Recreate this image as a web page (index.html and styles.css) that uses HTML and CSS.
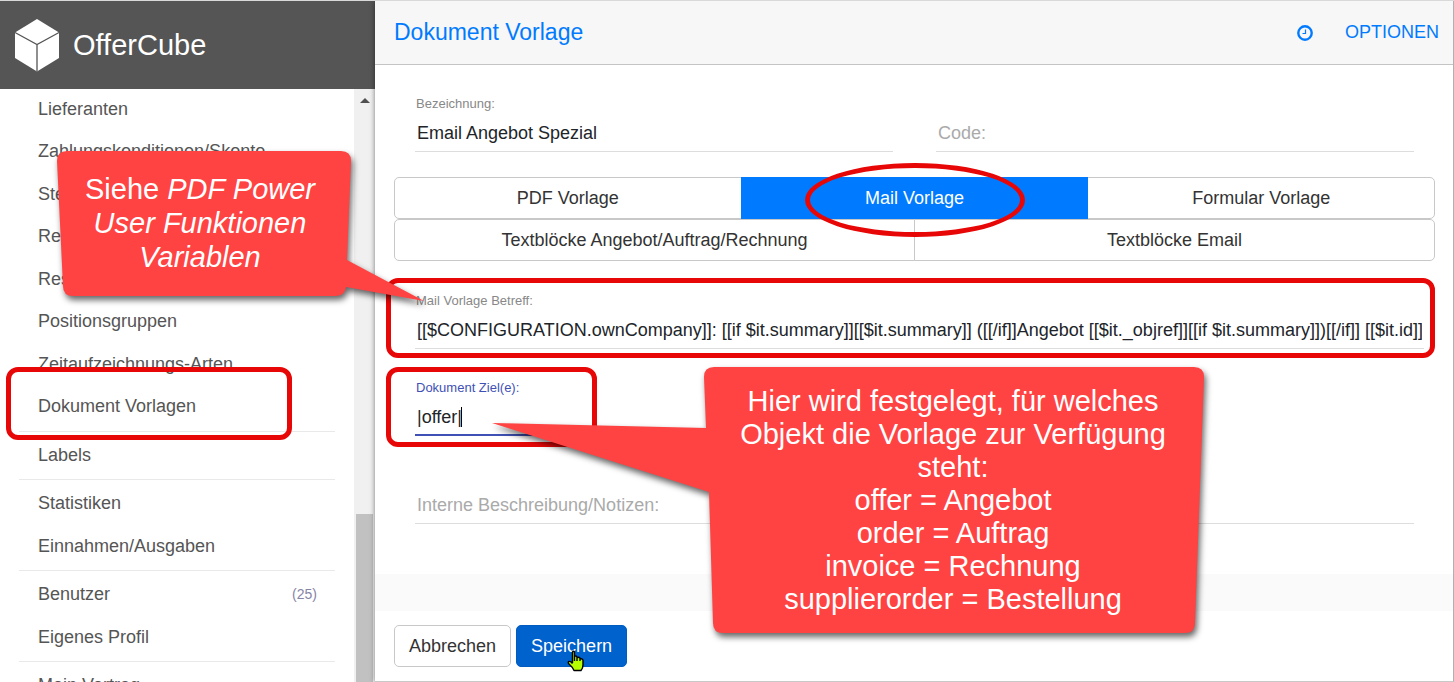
FILE: index.html
```html
<!DOCTYPE html>
<html lang="de">
<head>
<meta charset="utf-8">
<title>OfferCube - Dokument Vorlage</title>
<link rel="stylesheet" href="styles.css">
</head>
<body>
<aside class="sidebar">
	<div class="brand">
		<svg class="cube" width="46" height="54" viewBox="0 0 46 54">
			<path fill="#fff" d="M23 1 L45 14.500 V40 L23 53.500 L1 40 V14.500 Z"/>
			<path fill="none" stroke="#555" stroke-width="1.300" d="M1 14.500 L23 26.500 L45 14.500 M23 26.500 V53.500"/>
		</svg>
		<span>OfferCube</span>
	</div>
	<div class="menu-wrap">
		<nav class="menu">
			<ul class="long">
				<li><a href="#">Lieferanten</a></li>
				<li><a href="#">Zahlungskonditionen/Skonto</a></li>
				<li><a href="#">Steuersätze</a></li>
				<li><a href="#">Rechnungskreise</a></li>
				<li><a href="#">Ressourcen</a></li>
				<li><a href="#">Positionsgruppen</a></li>
				<li><a href="#">Zeitaufzeichnungs-Arten</a></li>
				<li class="marked"><a href="#">Dokument Vorlagen</a><span class="frame"></span></li>
			</ul>
			<ul>
				<li><a href="#">Labels</a></li>
			</ul>
			<ul>
				<li><a href="#">Statistiken</a></li>
				<li><a href="#">Einnahmen/Ausgaben</a></li>
			</ul>
			<ul>
				<li><a href="#">Benutzer</a><span class="count">(25)</span></li>
				<li><a href="#">Eigenes Profil</a></li>
			</ul>
			<ul>
				<li><a href="#">Mein Vertrag</a></li>
			</ul>
		</nav>
		<div class="scroll">
			<div class="arrow"></div>
			<div class="thumb"></div>
		</div>
	</div>
</aside>

<main class="main">
	<header class="top">
		<h1>Dokument Vorlage</h1>
		<button type="button" class="clock" aria-label="Verlauf">
			<svg width="16" height="16" viewBox="0 0 16 16" fill="none" stroke="#007bff">
				<circle cx="8" cy="8" r="6.700" stroke-width="2.400"/>
				<path d="M8.500 4.500 V8.500 H5.500" stroke-width="1.200"/>
			</svg>
		</button>
		<a href="#" class="options">OPTIONEN</a>
	</header>

	<form class="form">
		<div class="row">
			<div class="field">
				<label for="name">Bezeichnung:</label>
				<input type="text" id="name" value="Email Angebot Spezial">
			</div>
			<div class="field">
				<input type="text" id="code" placeholder="Code:" aria-label="Code">
			</div>
		</div>

		<div class="tabs">
			<div class="group">
				<button type="button">PDF Vorlage</button>
				<button type="button" class="active">Mail Vorlage<span class="ellipse"></span></button>
				<button type="button">Formular Vorlage</button>
			</div>
			<div class="group">
				<button type="button">Textblöcke Angebot/Auftrag/Rechnung</button>
				<button type="button">Textblöcke Email</button>
			</div>
		</div>

		<div class="field subject">
			<label for="subject">Mail Vorlage Betreff:</label>
			<input type="text" id="subject" value="[[$CONFIGURATION.ownCompany]]: [[if $it.summary]][[$it.summary]] ([[/if]]Angebot [[$it._objref]][[if $it.summary]])[[/if]] [[$it.id]]">
			<span class="frame"></span>
			<div class="callout variables">
				<svg width="380" height="160" viewBox="0 0 380 160">
					<path d="M11 1 H285 Q295 1 295 11 L291 110 L368 151 L290 137 Q289 146 279 146 H17 Q7 146 7 136 L1 11 Q1 1 11 1 Z"/>
				</svg>
				<p>Siehe <em>PDF Power<br>User Funktionen<br>Variablen</em></p>
			</div>
		</div>

		<div class="row">
			<div class="field target">
				<label for="target">Dokument Ziel(e):</label>
				<input type="text" id="target" value="|offer|">
				<span class="caret"></span>
				<span class="frame"></span>
				<div class="callout goals">
					<svg width="730" height="280" viewBox="0 0 730 280">
						<path d="M223 1 H703 Q713 1 713 11 L704 257 Q704 267 694 267 H232 Q222 267 222 257 L218 126 L1 57 L215 62 L213 11 Q213 1 223 1 Z"/>
					</svg>
					<p>Hier wird festgelegt, für welches<br>Objekt die Vorlage zur Verfügung<br>steht:<br>offer = Angebot<br>order = Auftrag<br>invoice = Rechnung<br>supplierorder = Bestellung</p>
				</div>
			</div>
		</div>

		<div class="field notes">
			<textarea id="notes" rows="1" placeholder="Interne Beschreibung/Notizen:" aria-label="Interne Beschreibung/Notizen"></textarea>
		</div>

		<div class="band"></div>

		<div class="actions">
			<button type="button" class="btn">Abbrechen</button>
			<button type="submit" class="btn save">Speichern
				<svg class="cursor" width="18" height="22" viewBox="0 0 18 22">
					<path fill="#b6ff00" stroke="#000" stroke-width="1.400" stroke-linejoin="round" d="M5.500 13 V2 Q6.500 0.500 7.500 2 V8 V6.500 Q9 5.500 10 7 V8 Q11.500 6.500 13 8 V9 Q15 8 16 10 V15 Q16 18 14 20.500 H7 Q5.500 17 2 14 Q0.500 12 2 11.500 Q3.500 11 5.500 13.500 M7.500 7 V11 M10 7.500 V11 M13 8.500 V11"/>
				</svg>
			</button>
		</div>
	</form>
</main>
</body>
</html>
```
FILE: styles.css
```css
* {
box-sizing: border-box;
}

body {
margin: 0;
display: grid;
grid-template-columns: 375px 1fr;
height: 100vh;
overflow: hidden;
border-top: 1px solid #d9d9d9;
background-color: white;
color: #212529;
font-family: "Liberation Sans", Arial, sans-serif;
font-size: 18px;
}

a {
text-decoration: none;
}

input, textarea, button {
font-family: inherit;
font-size: 18px;
color: inherit;
}

/* sidebar */
.sidebar {
display: flex;
flex-direction: column;
min-height: 0;
}

.brand {
display: flex;
align-items: center;
gap: 13px;
height: 88px;
padding-left: 14px;
flex: none;
background-color: #555;
color: white;
font-size: 29px;
}

.menu-wrap {
display: flex;
flex: 1;
min-height: 0;
overflow: hidden;
}

.menu {
flex: 1;
margin-top: -1px;
padding: 0 19px;
}

.menu ul {
display: flex;
flex-direction: column;
gap: 1px;
margin: 0;
padding: 2px 0 3px;
list-style: none;
border-top: 1px solid #e9e9e9;
}

.menu .long {
height: 343px;
padding-top: 0;
gap: 0;
border-top: 0;
}

.menu li {
display: flex;
flex: 1 0 42px;
align-items: center;
justify-content: space-between;
padding: 0 18px 0 19px;
}

.menu a {
color: #555;
}

.count {
color: #8585a5;
font-size: 14px;
}

.scroll {
display: flex;
flex-direction: column;
justify-content: space-between;
width: 21px;
padding: 9px 2px 0;
background-color: #f0f0f0;
}

.arrow {
align-self: center;
border: 5px solid transparent;
border-top: 0;
border-bottom-color: #505050;
}

.thumb {
height: 168px;
background-color: #c1c1c1;
}

/* main panel */
.main {
position: relative;
display: flex;
flex-direction: column;
min-width: 0;
border-right: 1px solid #b0b0b0;
border-bottom: 1px solid #c8c8c8;
background-color: white;
box-shadow: 0 0 5px rgba(0, 0, 0, 0.5);
}

.top {
display: flex;
align-items: center;
height: 64px;
padding: 0 14px 0 19px;
background-color: #f7f7f7;
border-bottom: 1px solid #c4c4c4;
color: #007bff;
}

.top h1 {
flex: 1;
margin: 0;
font-size: 23px;
font-weight: normal;
}

.clock {
display: flex;
margin-right: 32px;
padding: 0;
border: 0;
background: none;
}

.options {
color: #007bff;
}

.form {
padding-top: 30px;
}

.row {
display: grid;
grid-template-columns: 1fr 1fr;
gap: 43px;
}

.row, .notes {
margin: 0 39px 0 40px;
}

.field {
position: relative;
display: flex;
flex-direction: column;
justify-content: flex-end;
gap: 4px;
height: 57px;
}

.field label {
padding-left: 1px;
color: #888;
font-size: 13px;
line-height: 16px;
}

.field input, .field textarea {
width: 100%;
height: 36px;
padding: 0 2px;
border: 0;
border-bottom: 1px solid #ddd;
border-radius: 0;
outline: 0;
background: none;
resize: none;
line-height: 35px;
overflow: hidden;
}

.field ::placeholder {
color: #aaa;
opacity: 1;
}

.tabs {
margin: 25px 18px 31px 19px;
}

.group {
display: flex;
height: 42px;
}

.group button {
position: relative;
flex: 1;
margin-left: -1px;
border: 1px solid #c8c8c8;
background-color: white;
color: #333;
}

.group button:first-child {
margin-left: 0;
border-radius: 5px 0 0 5px;
}

.group button:last-child {
border-radius: 0 5px 5px 0;
}

.group .active {
z-index: 1;
border-color: #007bff;
background-color: #007bff;
color: white;
}

.subject {
margin: 0 29px 30px 40px;
}

.notes {
margin-top: 31px;
}

.target label {
color: #3f51b5;
}

.field #target {
border-bottom: 2px solid #3f51b5;
}

.caret {
position: absolute;
left: 46px;
bottom: 9px;
width: 1px;
height: 20px;
background-color: black;
}

.band {
height: 37px;
margin-top: 50px;
background-color: #fafafa;
}

.actions {
display: flex;
gap: 5px;
padding: 14px 19px;
}

.btn {
position: relative;
height: 42px;
padding: 0 14px;
border: 1px solid #c8c8c8;
border-radius: 5px;
background-color: white;
color: #333;
}

.save {
border-color: #005cbf;
background-color: #0062cc;
color: white;
}

.cursor {
position: absolute;
left: 50px;
top: 24px;
}

/* red markers and callouts */
.frame, .ellipse {
position: absolute;
border: 5px solid #e80707;
pointer-events: none;
}

.frame {
border-radius: 12px;
}

.marked {
position: relative;
}

.marked .frame {
top: -19px;
right: 43px;
bottom: -12px;
left: -13px;
}

.subject .frame {
top: -14px;
right: -11px;
bottom: -9px;
left: -29px;
}

.target .frame {
top: -12px;
bottom: -11px;
left: -29px;
width: 211px;
}

.ellipse {
left: 50%;
top: -15px;
width: 220px;
height: 74px;
margin-left: -110px;
border-radius: 50%;
}

.callout {
position: absolute;
z-index: 2;
color: white;
text-align: center;
}

.callout svg {
display: block;
overflow: visible;
fill: #ff4343;
filter: drop-shadow(2px 4px 3px rgba(0, 0, 0, 0.6));
}

.callout p {
position: absolute;
margin: 0;
font-size: 29px;
line-height: 33px;
white-space: nowrap;
}

.variables {
top: -142px;
left: -359px;
}

.variables p {
top: 22px;
left: 0;
width: 288px;
line-height: 34px;
}

.goals {
top: -13px;
left: 76px;
}

.goals p {
top: 19px;
left: 213px;
width: 498px;
}
```
